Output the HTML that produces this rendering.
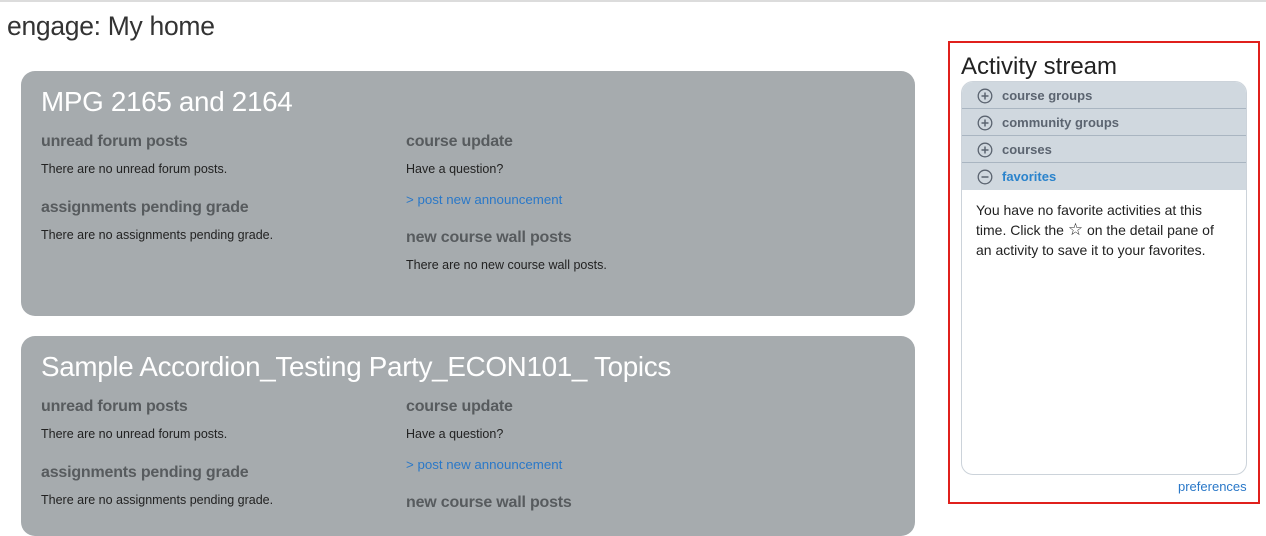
<!DOCTYPE html>
<html><head><meta charset="utf-8"><style>
*{margin:0;padding:0;box-sizing:border-box}
body{width:1266px;height:513px;overflow:hidden;background:#fff;font-family:"Liberation Sans",sans-serif;position:relative}
.abs{position:absolute;white-space:nowrap}
.card{position:absolute;left:21px;width:894px;background:#a6abae;border-radius:14px}
.t{position:absolute;left:20px;color:#fff;font-size:27.8px;letter-spacing:-0.3px}
.h{position:absolute;font-size:16px;font-weight:bold;color:#575b5e;letter-spacing:-0.2px}
.p{position:absolute;font-size:12.5px;color:#222}
.l{position:absolute;font-size:13.3px;color:#2a78c8}
.row{position:absolute;left:0;width:286px;height:27px;background:#d0d8df;border-bottom:1px solid #a9b5c1;font-size:13px;font-weight:bold;color:#5b6470}
.row span{position:absolute;left:40px;top:6px}
.row svg{position:absolute;left:15px;top:6px}
</style></head><body>
<div class="abs" style="left:0;top:0;width:1266px;height:2px;background:#dcdcdc"></div>
<div class="abs" style="left:7px;top:11px;font-size:26.5px;color:#333;letter-spacing:-0.3px">engage: My home</div>

<div class="card" style="top:71px;height:245px">
<div class="t" style="top:15px">MPG 2165 and 2164</div>
<div class="h" style="left:20px;top:62px">unread forum posts</div>
<div class="p" style="left:20px;top:91px">There are no unread forum posts.</div>
<div class="h" style="left:20px;top:128px">assignments pending grade</div>
<div class="p" style="left:20px;top:157px">There are no assignments pending grade.</div>
<div class="h" style="left:385px;top:62px">course update</div>
<div class="p" style="left:385px;top:91px">Have a question?</div>
<div class="l" style="left:385px;top:121px">&gt; post new announcement</div>
<div class="h" style="left:385px;top:158px">new course wall posts</div>
<div class="p" style="left:385px;top:187px">There are no new course wall posts.</div>
</div>

<div class="card" style="top:336px;height:200px">
<div class="t" style="top:15px">Sample Accordion_Testing Party_ECON101_ Topics</div>
<div class="h" style="left:20px;top:62px">unread forum posts</div>
<div class="p" style="left:20px;top:91px">There are no unread forum posts.</div>
<div class="h" style="left:20px;top:128px">assignments pending grade</div>
<div class="p" style="left:20px;top:157px">There are no assignments pending grade.</div>
<div class="h" style="left:385px;top:62px">course update</div>
<div class="p" style="left:385px;top:91px">Have a question?</div>
<div class="l" style="left:385px;top:121px">&gt; post new announcement</div>
<div class="h" style="left:385px;top:158px">new course wall posts</div>
</div>

<div class="abs" style="left:948px;top:41px;width:312px;height:463px;border:2px solid #e0201c"></div>
<div class="abs" style="left:961px;top:53px;font-size:24px;color:#222">Activity stream</div>
<div class="abs" style="left:961px;top:81px;width:286px;height:394px;border:1px solid #ccd3da;border-radius:12px;overflow:hidden;background:#fff">
<div class="row" style="top:0"><svg width="16" height="16" viewBox="0 0 16 16"><circle cx="8" cy="8" r="6.8" fill="none" stroke="#5b6470" stroke-width="1.3"/><path d="M4.5 8h7M8 4.5v7" stroke="#5b6470" stroke-width="1.5"/></svg><span>course groups</span></div>
<div class="row" style="top:27px"><svg width="16" height="16" viewBox="0 0 16 16"><circle cx="8" cy="8" r="6.8" fill="none" stroke="#5b6470" stroke-width="1.3"/><path d="M4.5 8h7M8 4.5v7" stroke="#5b6470" stroke-width="1.5"/></svg><span>community groups</span></div>
<div class="row" style="top:54px"><svg width="16" height="16" viewBox="0 0 16 16"><circle cx="8" cy="8" r="6.8" fill="none" stroke="#5b6470" stroke-width="1.3"/><path d="M4.5 8h7M8 4.5v7" stroke="#5b6470" stroke-width="1.5"/></svg><span>courses</span></div>
<div class="row" style="top:81px;border-bottom:none"><svg width="16" height="16" viewBox="0 0 16 16"><circle cx="8" cy="8" r="6.8" fill="none" stroke="#5b6470" stroke-width="1.3"/><path d="M4.5 8h7" stroke="#5b6470" stroke-width="1.5"/></svg><span style="color:#2a83cc">favorites</span></div>
<div class="abs" style="left:14px;top:118px;font-size:14px;line-height:20px;color:#222">You have no favorite activities at this<br>time. Click the <span style="font-size:17px;line-height:14px">☆</span> on the detail pane of<br>an activity to save it to your favorites.</div>
</div>
<div class="abs" style="left:1178px;top:479px;font-size:13px;color:#2a78c8">preferences</div>
</body></html>
